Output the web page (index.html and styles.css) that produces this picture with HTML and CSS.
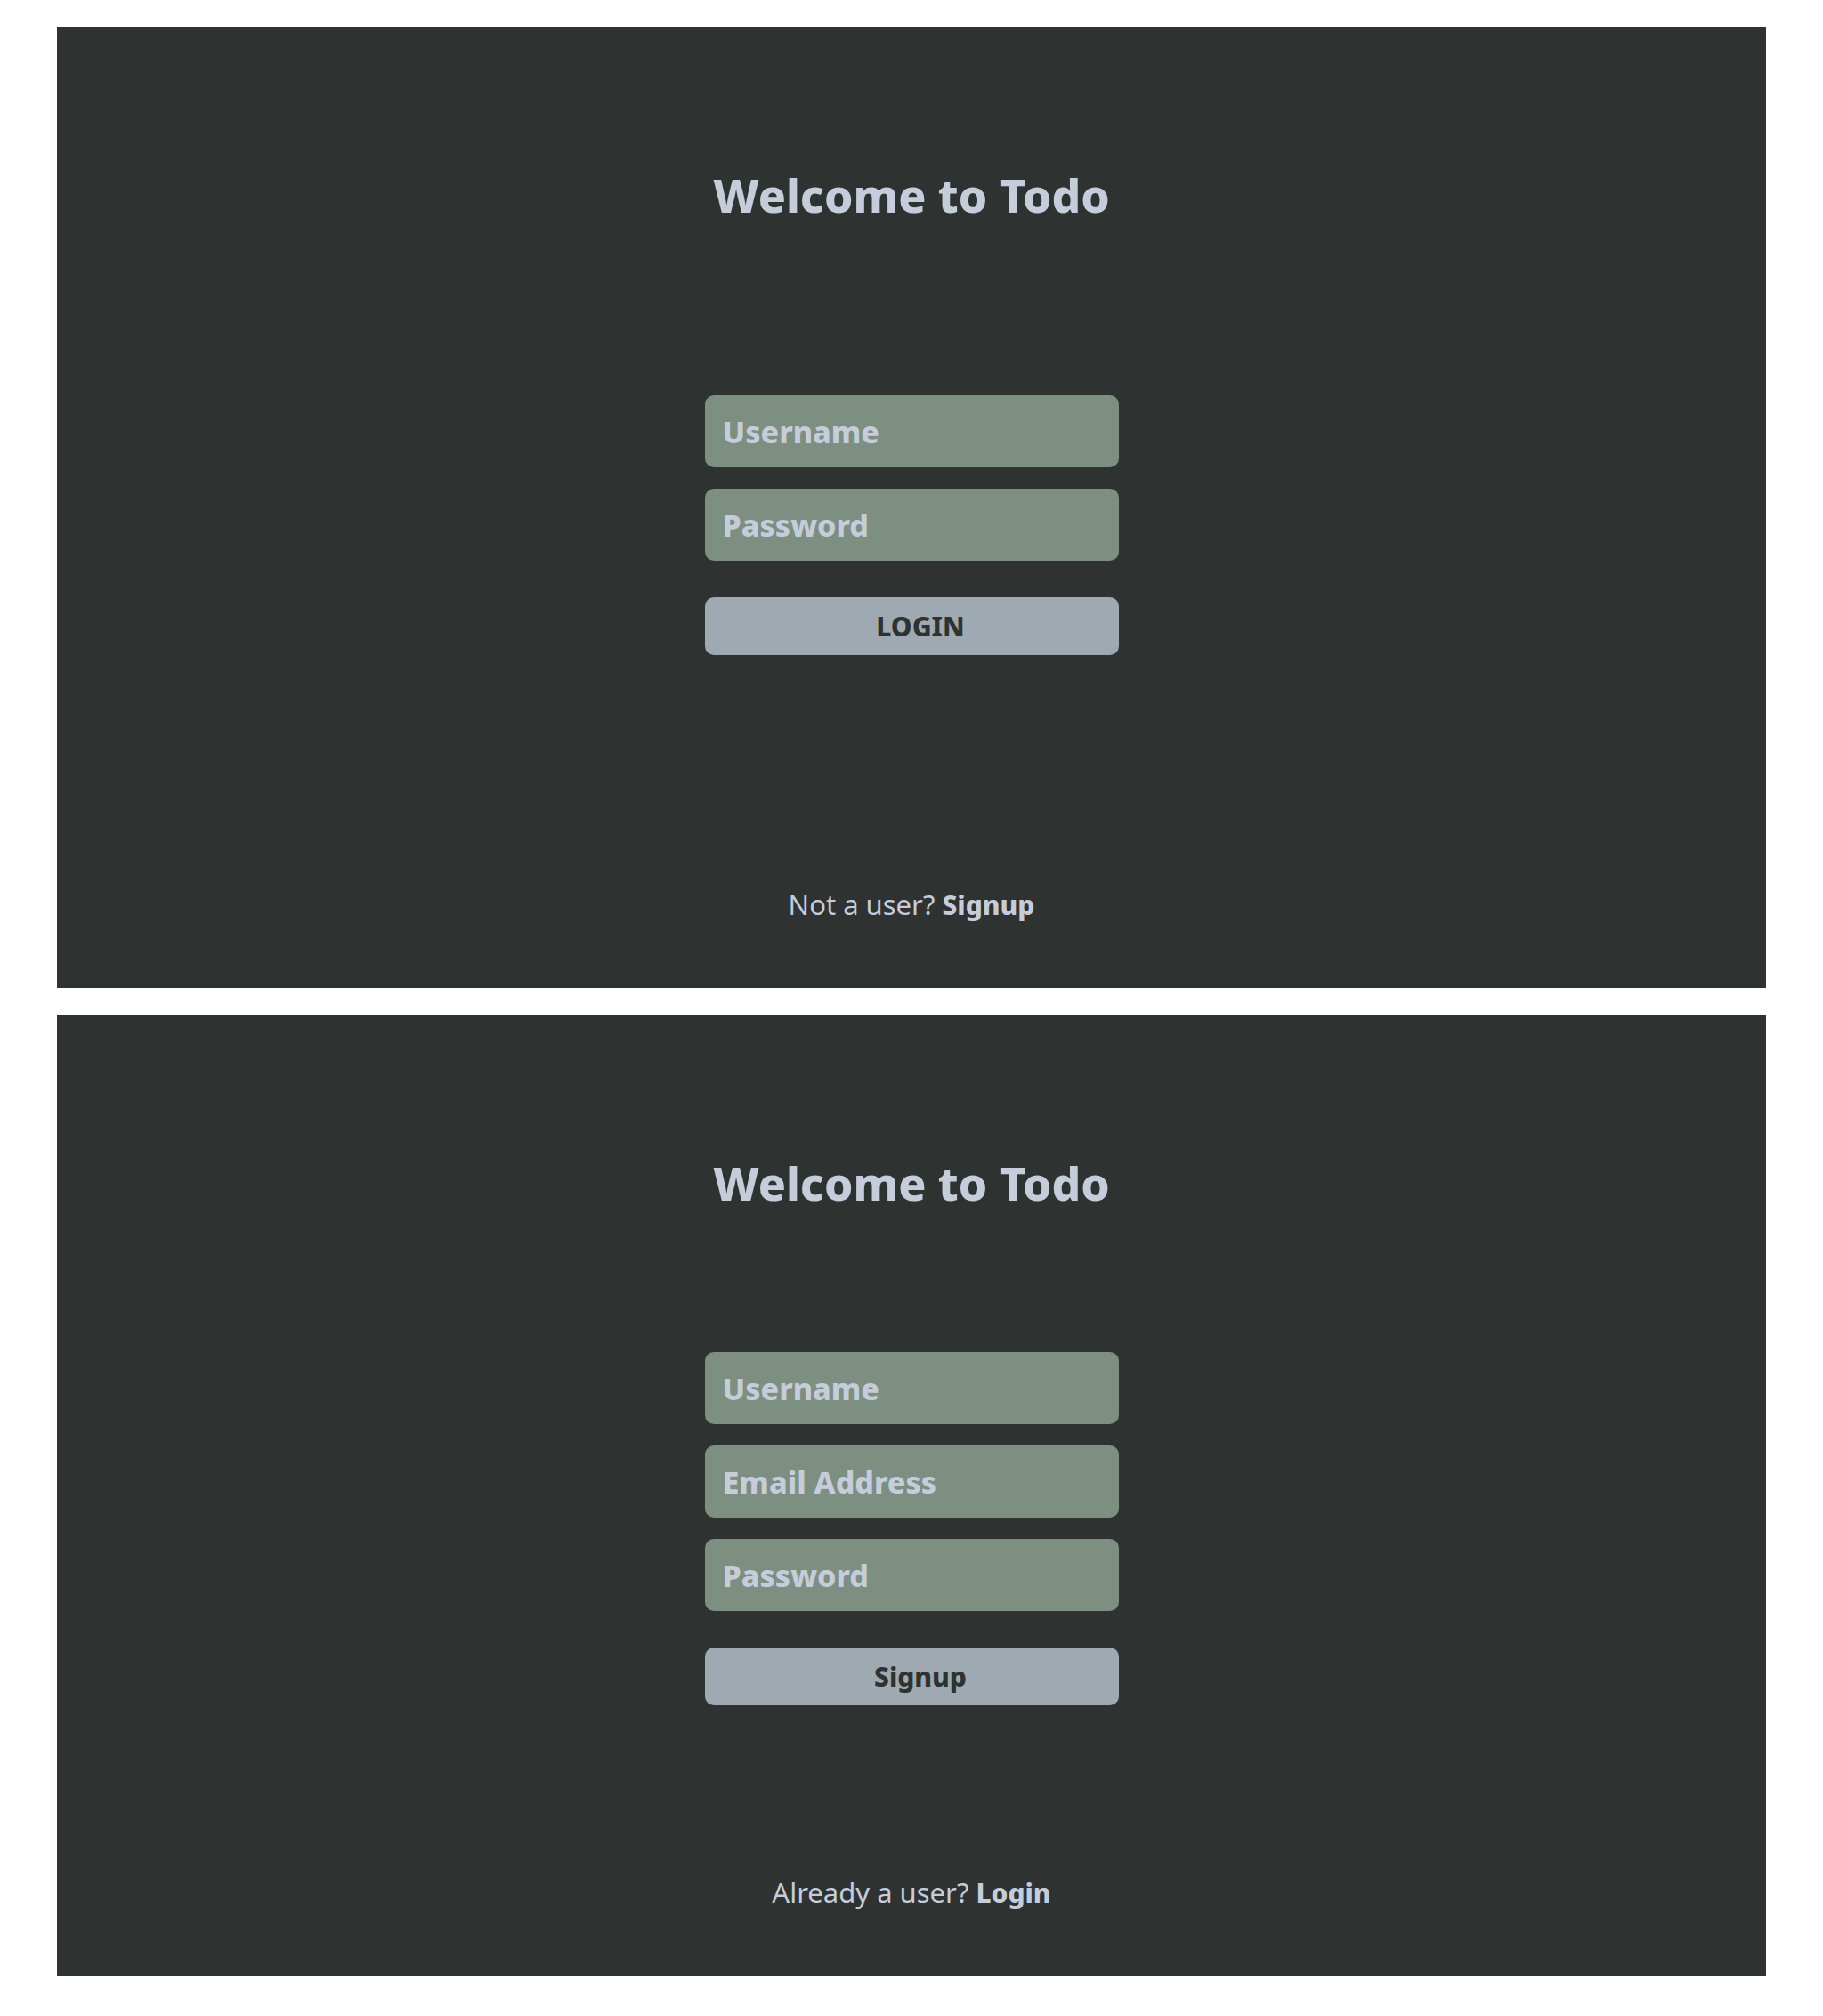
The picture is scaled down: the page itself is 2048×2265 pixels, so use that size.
FILE: index.html
```html
<!DOCTYPE html>
<html lang="en">
<head>
<meta charset="utf-8">
<title>Welcome to Todo</title>
<link rel="stylesheet" href="styles.css">
</head>
<body>
  <section class="panel panel--login">
    <h1 class="title">Welcome to Todo</h1>
    <form class="form">
      <input class="field" type="text" placeholder="Username">
      <input class="field" type="password" placeholder="Password">
      <button class="btn btn--upper" type="button">Login</button>
    </form>
    <p class="footer">Not a user? <a class="footer-link" href="#">Signup</a></p>
  </section>
  <section class="panel panel--signup">
    <h1 class="title">Welcome to Todo</h1>
    <form class="form">
      <input class="field" type="text" placeholder="Username">
      <input class="field" type="email" placeholder="Email Address">
      <input class="field" type="password" placeholder="Password">
      <button class="btn" type="button">Signup</button>
    </form>
    <p class="footer">Already a user? <a class="footer-link" href="#">Login</a></p>
  </section>
</body>
</html>
```
FILE: styles.css
```css
* { box-sizing: border-box; }

html, body {
  margin: 0;
  background: #ffffff;
}

body {
  padding: 30px 64px 45px;
  display: flex;
  flex-direction: column;
  gap: 30px;
  font-family: "Noto Sans", "Open Sans", sans-serif;
}

.panel {
  width: 1920px;
  height: 1080px;
  background: #2e3332;
  display: flex;
  flex-direction: column;
  align-items: center;
  padding-top: 154px;
  padding-bottom: 73px;
}

.title {
  margin: 0;
  font-size: 51.5px;
  font-weight: 800;
  line-height: 70px;
  color: #c5ccda;
}

.form {
  width: 465px;
  display: flex;
  flex-direction: column;
  gap: 24px;
  margin-top: 190px;
}

.panel--signup .form {
  margin-top: 155px;
}

.field {
  display: block;
  width: 100%;
  height: 81px;
  border: none;
  border-radius: 10px;
  background: #7d8f80;
  padding: 0 20px;
  font-family: inherit;
  font-size: 34px;
  font-weight: 800;
  color: #c5ccda;
  outline: none;
}

.field::placeholder {
  color: #c5ccda;
  opacity: 1;
}

.btn {
  display: block;
  width: 100%;
  height: 65px;
  margin-top: 17px;
  border: none;
  border-radius: 10px;
  background: #9ea9b1;
  padding: 0 0 0 20px;
  font-family: inherit;
  font-size: 30px;
  font-weight: 800;
  color: #2e3332;
  cursor: pointer;
}

.btn--upper {
  text-transform: uppercase;
}

.footer {
  margin: auto 0 0;
  font-size: 31px;
  line-height: 41px;
  color: #c5ccda;
}

.footer-link {
  color: inherit;
  font-size: 30px;
  font-weight: 800;
  text-decoration: none;
}
```
